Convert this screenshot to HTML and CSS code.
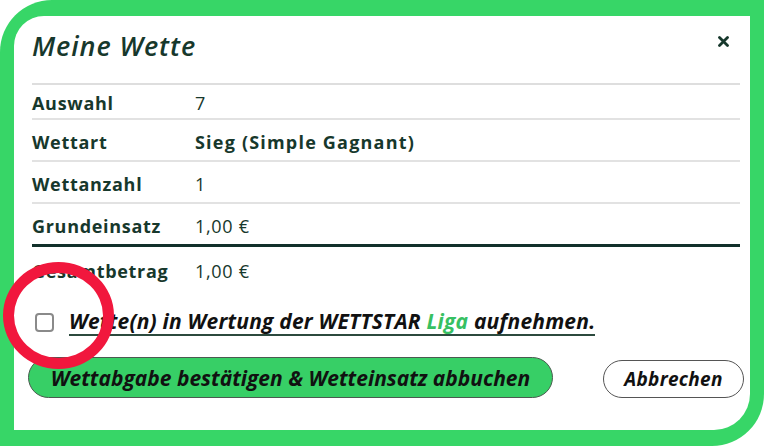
FILE: index.html
```html
<!DOCTYPE html>
<html lang="de">
<head>
<meta charset="utf-8">
<title>Meine Wette</title>
<link rel="stylesheet" href="styles.css">
</head>
<body>
<div class="frame">
  <div class="panel">
    <div class="header">
      <h1 class="title">Meine Wette</h1>
      <svg class="close" width="11" height="11" viewBox="0 0 11 11" aria-label="Schließen"><path d="M1.5 1.5 L9.5 9.5 M9.5 1.5 L1.5 9.5" stroke="#17382c" stroke-width="2.8" stroke-linecap="round"/></svg>
    </div>
    <div class="row r1"><span class="label">Auswahl</span><span class="value">7</span></div>
    <div class="row"><span class="label">Wettart</span><span class="value strong">Sieg (Simple Gagnant)</span></div>
    <div class="row"><span class="label">Wettanzahl</span><span class="value">1</span></div>
    <div class="row total-sep"><span class="label">Grundeinsatz</span><span class="value">1,00 €</span></div>
    <div class="row last"><span class="label">Gesamtbetrag</span><span class="value">1,00 €</span></div>
    <label class="check">
      <span class="box"></span>
      <span class="check-text">Wette(n) in Wertung der WETTSTAR <span class="liga">Liga</span> aufnehmen.</span>
    </label>
    <div class="actions">
      <button class="btn primary">Wettabgabe bestätigen &amp; Wetteinsatz abbuchen</button>
      <button class="btn secondary">Abbrechen</button>
    </div>
  </div>
</div>
<div class="marker"></div>
</body>
</html>
```

FILE: styles.css
```css
html, body {
  margin: 0;
  padding: 0;
  background: #ffffff;
}
body {
  width: 764px;
  height: 446px;
  overflow: hidden;
  position: relative;
  font-family: "Open Sans", "DejaVu Sans", sans-serif;
  color: #17382c;
}
.frame {
  width: 764px;
  height: 446px;
  box-sizing: border-box;
  background: #37d667;
  border-radius: 52px 0 52px 0;
  padding: 16px 14px 16px 14px;
}
.panel {
  height: 100%;
  background: #ffffff;
  border-radius: 30px 0 36px 0;
  padding: 0 10px 0 18px;
  box-sizing: border-box;
  display: flex;
  flex-direction: column;
}
.header {
  height: 69px;
  box-sizing: border-box;
  display: flex;
  justify-content: space-between;
  align-items: flex-start;
  padding-top: 12px;
  border-bottom: 2px solid #dedede;
}
.title {
  margin: 0;
  font-size: 27px;
  line-height: 36px;
  font-style: italic;
  font-weight: 600;
  letter-spacing: 0.9px;
  color: #17382c;
}
.close {
  display: block;
  margin-top: 8px;
  margin-right: 11px;
}
.row {
  display: flex;
  align-items: center;
  height: 42px;
  box-sizing: border-box;
  border-bottom: 2px solid #e2e2e2;
  font-size: 18px;
  letter-spacing: 0.7px;
  padding-top: 3px;
}
.row.r1 {
  height: 35px;
}
.row.total-sep {
  height: 43px;
  border-bottom: 3px solid #12302a;
}
.row.last {
  border-bottom: none;
  height: 48px;
  padding-top: 0;
}
.label {
  width: 163px;
  font-weight: 700;
  flex: none;
}
.value {
  font-weight: 400;
}
.value.strong {
  font-weight: 700;
  letter-spacing: 1.2px;
}
.check {
  display: flex;
  align-items: center;
  margin-top: 9px;
  height: 36px;
  padding-left: 3px;
}
.box {
  width: 15px;
  height: 15px;
  border: 2px solid #8a8a8a;
  border-radius: 4px;
  flex: none;
}
.check-text {
  margin-left: 15px;
  font-style: italic;
  font-weight: 700;
  font-size: 21px;
  letter-spacing: 0.2px;
  color: #111111;
  border-bottom: 2px solid #2c4a3e;
  line-height: 26px;
}
.liga {
  color: #37c062;
}
.actions {
  display: flex;
  justify-content: space-between;
  align-items: center;
  margin-top: 17px;
  margin-left: -4px;
}
.btn {
  font-family: "Open Sans", "DejaVu Sans", sans-serif;
  font-style: italic;
  font-weight: 700;
  color: #111111;
  border-radius: 21px;
  cursor: pointer;
  padding: 0;
}
.primary {
  width: 525px;
  height: 41px;
  background: #37cf66;
  border: 1px solid #4b5a50;
  font-size: 21px;
}
.secondary {
  width: 141px;
  height: 38px;
  background: #ffffff;
  border: 1px solid #555555;
  font-size: 19px;
  letter-spacing: 0.3px;
  margin-right: -4px;
  margin-top: 3px;
}
.marker {
  position: absolute;
  left: 3px;
  top: 262px;
  width: 111px;
  height: 107px;
  box-sizing: border-box;
  border: 11px solid #f1173d;
  border-radius: 50%;
}
```
